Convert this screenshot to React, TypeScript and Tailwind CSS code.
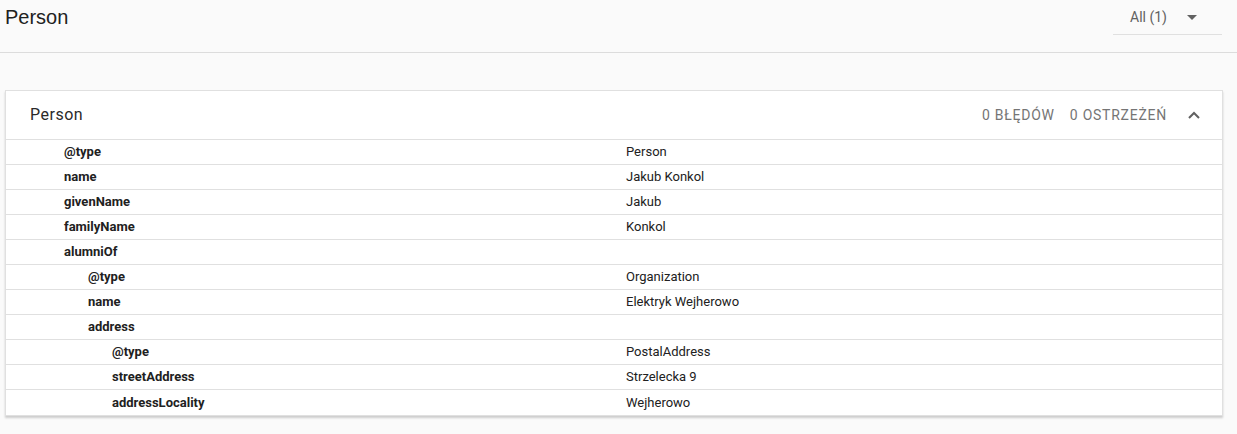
import React from 'react';

const ROWS: { key: string; value: string; level: number }[] = [
  { key: '@type', value: 'Person', level: 0 },
  { key: 'name', value: 'Jakub Konkol', level: 0 },
  { key: 'givenName', value: 'Jakub', level: 0 },
  { key: 'familyName', value: 'Konkol', level: 0 },
  { key: 'alumniOf', value: '', level: 0 },
  { key: '@type', value: 'Organization', level: 1 },
  { key: 'name', value: 'Elektryk Wejherowo', level: 1 },
  { key: 'address', value: '', level: 1 },
  { key: '@type', value: 'PostalAddress', level: 2 },
  { key: 'streetAddress', value: 'Strzelecka 9', level: 2 },
  { key: 'addressLocality', value: 'Wejherowo', level: 2 },
];

const INDENT = ['pl-[58px]', 'pl-[82px]', 'pl-[106px]'];

export default function App() {
  return (
    <div className="min-h-[434px] bg-[#fafafa] font-['Roboto',sans-serif] text-[#212121]">
      {/* Top bar */}
      <header className="flex h-[53px] items-start justify-between border-b border-[#dcdcdc]">
        <h1 className="pl-[5px] pt-[5px] font-['Liberation_Sans',Arial,sans-serif] text-[20px] leading-[24px] text-[#212121]">
          Person
        </h1>
        <div className="mr-[15px] flex h-[35px] w-[109px] items-center justify-between border-b border-[#e0e0e0] pl-[17px] pr-[25px]">
          <span className="text-[14px] text-[#616161]">All (1)</span>
          <svg width="10" height="5" viewBox="0 0 10 5" className="mt-[1px]">
            <path d="M0 0h10L5 5z" fill="#616161" />
          </svg>
        </div>
      </header>

      {/* Card */}
      <section className="mx-[5px] mt-[37px] w-[1218px] border border-[#e0e0e0] bg-white shadow-[0_2px_2px_rgba(0,0,0,0.18)]">
        <div className="flex h-[49px] items-center border-b border-[#e0e0e0] pl-[24px] pr-[22px]">
          <span className="flex-1 text-[16px] tracking-[0.5px] text-[#2a2a2a]">Person</span>
          <span className="text-[14px] tracking-[0.75px] text-[#757575]">0 BŁĘDÓW</span>
          <span className="ml-[15px] text-[14px] tracking-[0.75px] text-[#757575]">0 OSTRZEŻEŃ</span>
          <svg width="12" height="8" viewBox="0 0 12 8" className="ml-[21px]">
            <path d="M1 7l5-5 5 5" fill="none" stroke="#616161" strokeWidth="2" />
          </svg>
        </div>
        <div>
          {ROWS.map((row, i) => (
            <div
              key={i}
              className={
                'grid h-[25px] grid-cols-[620px_1fr] items-center text-[13px] ' +
                (i < ROWS.length - 1 ? 'border-b border-[#e0e0e0]' : '')
              }
            >
              <span className={INDENT[row.level] + ' font-bold'}>{row.key}</span>
              <span>{row.value}</span>
            </div>
          ))}
        </div>
      </section>
    </div>
  );
}
